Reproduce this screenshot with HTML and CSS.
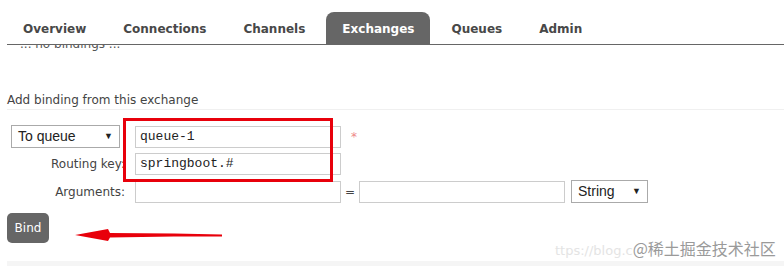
FILE: index.html
```html
<!DOCTYPE html>
<html lang="en">
<head>
    <meta charset="UTF-8">
    <title>Exchanges</title>
    <link rel="stylesheet" href="styles.css">
</head>
<body>
    <header>
        <ul class="tabs">
            <li>Overview</li>
            <li>Connections</li>
            <li>Channels</li>
            <li class="active">Exchanges</li>
            <li>Queues</li>
            <li>Admin</li>
        </ul>
    </header>
    <main>
        <div class="clipped"><p>... no bindings ...</p></div>

        <h3>Add binding from this exchange</h3>

        <div class="form">
            <div class="row">
                <div class="label">
                    <div class="select wide">To queue <span class="caret">&#9660;</span></div>
                </div>
                <div class="input mono">queue-1</div>
                <span class="mandatory">*</span>
            </div>
            <div class="row">
                <div class="label">Routing key:</div>
                <div class="input mono">springboot.#</div>
            </div>
            <div class="row">
                <div class="label">Arguments:</div>
                <div class="input"></div>
                <span class="eq">=</span>
                <div class="input"></div>
                <div class="select narrow">String <span class="caret">&#9660;</span></div>
            </div>
            <div class="highlight"></div>
        </div>

        <div class="actions">
            <button class="button">Bind</button>
            <svg class="arrow" width="160" height="16" viewBox="0 0 160 16">
                <path d="M1 8 L34 2 L36 6 L100 6.5 L148 7.5 L148 9.5 L100 9.5 L36 10.5 L34 14 Z" fill="#e8000b"/>
            </svg>
            <div class="watermark"><span class="url">ttps://blog.c</span>@稀土掘金技术社区</div>
        </div>
        <div class="band"></div>
    </main>
</body>
</html>
```

FILE: styles.css
```css
body {
    margin: 0;
    padding: 0;
    background-color: #fff;
    font-family: "DejaVu Sans", Verdana, sans-serif;
    font-size: 12px;
    color: #444;
}

header {
    padding: 12px 0 0 7px;
}

.tabs {
    list-style: none;
    margin: 0;
    padding: 0;
    display: flex;
    gap: 5px;
    border-bottom: 1px solid #666;
}

.tabs li {
    height: 32px;
    box-sizing: border-box;
    padding: 2px 16px 0 16px;
    line-height: 30px;
    font-weight: bold;
    font-size: 12px;
    color: #484848;
    border-radius: 8px 8px 0 0;
}

.tabs li.active {
    background-color: #666;
    color: #fff;
}

main {
    padding: 0 0 0 7px;
}

.clipped {
    height: 6px;
    overflow: hidden;
}

.clipped p {
    margin: -8px 0 0 13px;
    font-size: 12px;
    color: #555;
}

h3 {
    margin: 42px 0 0 0;
    padding-bottom: 2px;
    font-size: 12px;
    font-weight: normal;
    color: #444;
    border-bottom: 1px solid #f0f0f0;
}

.form {
    position: relative;
    margin-top: 15px;
    display: flex;
    flex-direction: column;
    gap: 5px;
}

.row {
    display: flex;
    align-items: center;
}

.label {
    width: 118px;
    padding-right: 4px;
    text-align: right;
    font-size: 12px;
    color: #444;
}

.input {
    width: 200px;
    height: 20px;
    line-height: 20px;
    margin-left: 6px;
    padding-left: 4px;
    border: 1px solid #ccc;
    font-size: 13px;
    color: #222;
}

.mono {
    font-family: "Liberation Mono", "Courier New", monospace;
}

.select {
    height: 21px;
    line-height: 21px;
    border: 1px solid #aaa;
    padding: 0 6px;
    display: flex;
    justify-content: space-between;
    font-family: "Liberation Sans", Arial, sans-serif;
    font-size: 14px;
    color: #222;
    text-align: left;
}

.select.wide {
    margin-left: 4px;
    width: 95px;
}

.select.narrow {
    margin-left: 6px;
    width: 63px;
}

.caret {
    font-size: 9px;
}

.mandatory {
    margin-left: 10px;
    color: #e88;
    font-size: 12px;
}

.eq {
    margin-left: 4px;
    width: 8px;
    color: #444;
}

.highlight {
    position: absolute;
    left: 116px;
    top: -7px;
    width: 204px;
    height: 58px;
    border: 3px solid #e8000b;
}

.actions {
    position: relative;
    margin-top: 10px;
    height: 30px;
}

.button {
    background-color: #666;
    color: #fff;
    border: none;
    height: 30px;
    width: 42px;
    padding: 0;
    border-radius: 5px;
    font-family: "DejaVu Sans", Verdana, sans-serif;
    font-size: 12px;
}

.arrow {
    position: absolute;
    left: 67px;
    top: 14px;
}

.watermark {
    position: absolute;
    left: 548px;
    top: 23px;
    font-family: "Noto Sans CJK SC", sans-serif;
    font-size: 16px;
    color: #9a9a9a;
    white-space: nowrap;
}

.watermark .url {
    font-family: "DejaVu Sans", sans-serif;
    font-size: 13px;
    color: #e4e4e4;
}

.band {
    margin-top: 18px;
    height: 7px;
    background-color: #f5f5f5;
}
```
